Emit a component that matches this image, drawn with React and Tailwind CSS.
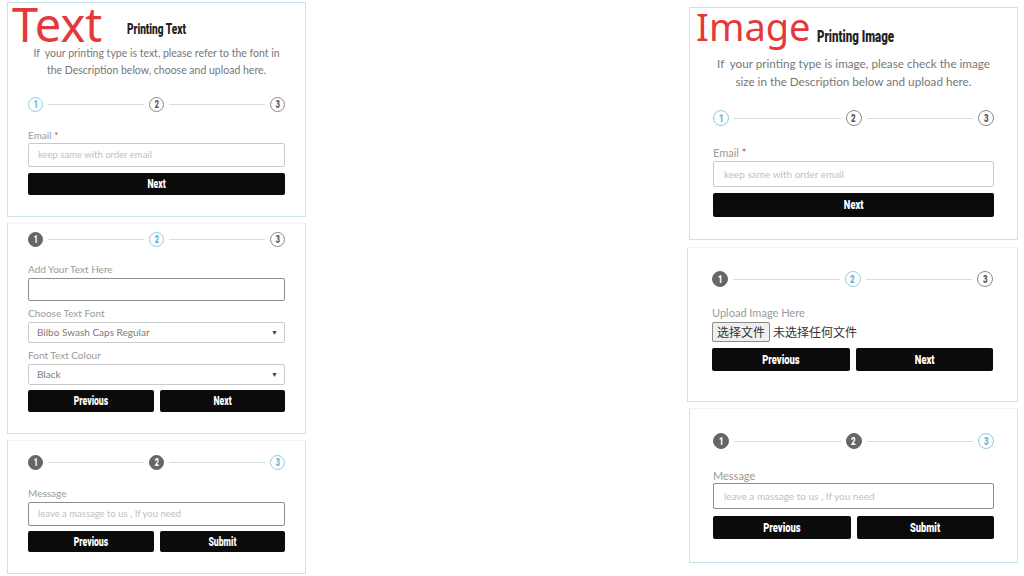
import React from 'react';

const cond = "font-['Roboto','Liberation_Sans',sans-serif]";
const light = "font-['Lato','Open_Sans',sans-serif]";

const Squeeze = ({ children, className = '' }) => (
  <span className={`inline-block scale-x-[0.72] ${className}`}>{children}</span>
);

const Circle = ({ n, state, size }) => {
  const dim = size === 'lg' ? 'w-[16px] h-[16px] text-[11px]' : 'w-[15px] h-[15px] text-[10px]';
  const look =
    state === 'done'
      ? 'bg-[#666] border-[#666] text-white'
      : state === 'active'
      ? 'bg-white border-[#8fcde0] text-[#5db4cf]'
      : 'bg-white border-[#8a8a8a] text-[#555]';
  return (
    <div className={`${dim} ${look} ${cond} shrink-0 rounded-full border-[1.5px] flex items-center justify-center font-black leading-none`}>
      <Squeeze>{n}</Squeeze>
    </div>
  );
};

const Stepper = ({ step, size, className = '' }) => {
  const state = (i) => (i < step ? 'done' : i === step ? 'active' : 'todo');
  return (
    <div className={`flex items-center ${className}`}>
      <Circle n="1" state={state(1)} size={size} />
      <div className="flex-1 h-px bg-[#d6dde0] mx-[5px]" />
      <Circle n="2" state={state(2)} size={size} />
      <div className="flex-1 h-px bg-[#d6dde0] mx-[5px]" />
      <Circle n="3" state={state(3)} size={size} />
    </div>
  );
};

const Label = ({ children, className = '', big }) => (
  <div className={`${light} ${big ? 'text-[11px]' : 'text-[10px]'} text-[#9a9a9a] leading-[14px] h-[14px] ${className}`}>{children}</div>
);

const Input = ({ placeholder, className = '', big, dark }) => (
  <div
    className={`${light} ${big ? 'text-[10px] px-[10px]' : 'text-[9.5px] px-[9px]'} flex items-center rounded-[2px] border ${
      dark ? 'border-[#8d8d8d]' : 'border-[#c9c9c9]'
    } text-[#c0c0c0] ${className}`}
  >
    {placeholder}
  </div>
);

const Select = ({ value, className = '' }) => (
  <div className={`${light} text-[10px] text-[#7a7a7a] flex items-center justify-between pl-[8px] pr-[6px] rounded-[2px] border border-[#c9c9c9] ${className}`}>
    <span>{value}</span>
    <span className="text-[7px] text-[#444]">▼</span>
  </div>
);

const Button = ({ children, className = '', big }) => (
  <div
    className={`${cond} ${big ? 'text-[13px]' : 'text-[12px]'} flex-1 flex items-center justify-center bg-[#0b0b0b] text-white font-black rounded-[2px] ${className}`}
  >
    <Squeeze>{children}</Squeeze>
  </div>
);

const Panel = ({ children, className = '' }) => (
  <div className={`bg-white border border-[#c7e3ec] ${className}`}>{children}</div>
);

export default function App() {
  return (
    <div className="w-[1024px] h-[576px] bg-white overflow-hidden flex">
      {/* left column: printing text */}
      <div className="ml-[7px] w-[299px] flex flex-col">
        <Panel className="mt-[2px] px-[20px] pb-[21px]">
          <div className="h-[40px] -ml-[16px] flex items-start">
            <span className="font-['Noto_Sans',sans-serif] text-[47px] leading-[42px] text-[#e4393c]">Text</span>
            <span className={`${cond} ml-[25px] mt-[19px] text-[14px] leading-[14px] font-black text-[#222]`}>
              <Squeeze className="origin-left">Printing Text</Squeeze>
            </span>
          </div>
          <p className={`${light} mt-[2px] text-[10.5px] leading-[17px] text-[#777] text-center whitespace-nowrap`}>
            If&nbsp; your printing type is text, please refer to the font in
            <br />
            the Description below, choose and upload here.
          </p>
          <Stepper step={1} className="mt-[18px]" />
          <Label className="mt-[16px]">
            Email <span className="text-[#e4393c]">*</span>
          </Label>
          <Input placeholder="keep same with order email" className="mt-[1px] h-[24px]" />
          <div className="mt-[6px] h-[22px] flex">
            <Button>Next</Button>
          </div>
        </Panel>

        <Panel className="mt-[6px] px-[20px] pt-[8px] pb-[21px] border-t-[#edf5f8]">
          <Stepper step={2} />
          <Label className="mt-[15px]">Add Your Text Here</Label>
          <Input placeholder="" dark className="mt-[2px] h-[23px]" />
          <Label className="mt-[5px]">Choose Text Font</Label>
          <Select value="Bilbo Swash Caps Regular" className="mt-[2px] h-[21px]" />
          <Label className="mt-[5px]">Font Text Colour</Label>
          <Select value="Black" className="mt-[2px] h-[21px]" />
          <div className="mt-[5px] h-[22px] flex gap-[6px]">
            <Button>Previous</Button>
            <Button>Next</Button>
          </div>
        </Panel>

        <Panel className="mt-[6px] px-[20px] pt-[14px] pb-[21px] border-t-[#edf5f8]">
          <Stepper step={3} />
          <Label className="mt-[16px]">Message</Label>
          <Input placeholder="leave a massage to us , If you need" dark className="mt-[2px] h-[24px]" />
          <div className="mt-[5px] h-[21px] flex gap-[6px]">
            <Button>Previous</Button>
            <Button>Submit</Button>
          </div>
        </Panel>
      </div>

      {/* right column: printing image */}
      <div className="ml-auto mr-[6px] w-[331px] flex flex-col">
        <Panel className="mt-[7px] ml-[2px] px-[23px] pb-[22px]">
          <div className="h-[36px] -ml-[17px] flex items-start">
            <span className="font-['Noto_Sans',sans-serif] text-[38px] leading-[37px] text-[#e4393c]">Image</span>
            <span className={`${cond} ml-[6px] mt-[21px] text-[16px] leading-[16px] font-black text-[#222]`}>
              <Squeeze className="origin-left">Printing Image</Squeeze>
            </span>
          </div>
          <p className={`${light} mt-[10px] text-[11.7px] leading-[18px] text-[#777] text-center whitespace-nowrap`}>
            If&nbsp; your printing type is image, please check the image
            <br />
            size in the Description below and upload here.
          </p>
          <Stepper step={1} size="lg" className="mt-[20px]" />
          <Label big className="mt-[20px]">
            Email <span className="text-[#e4393c]">*</span>
          </Label>
          <Input big placeholder="keep same with order email" className="mt-[1px] h-[26px]" />
          <div className="mt-[6px] h-[24px] flex">
            <Button big>Next</Button>
          </div>
        </Panel>

        <Panel className="mt-[7px] px-[24px] pt-[23px] pb-[30px] border-t-[#edf5f8]">
          <Stepper step={2} size="lg" />
          <Label big className="mt-[19px]">Upload Image Here</Label>
          <div className="mt-[2px] h-[20px] flex items-center font-['Noto_Sans_CJK_SC',sans-serif] text-[12px] text-[#333]">
            <span className="h-[20px] px-[4px] flex items-center border border-[#8a8a8a] bg-[#efefef] rounded-[2px]">选择文件</span>
            <span className="ml-[3px]">未选择任何文件</span>
          </div>
          <div className="mt-[6px] h-[23px] flex gap-[6px]">
            <Button big>Previous</Button>
            <Button big>Next</Button>
          </div>
        </Panel>

        <Panel className="mt-[6px] ml-[2px] px-[23px] pt-[24px] pb-[23px] border-t-[#edf5f8]">
          <Stepper step={3} size="lg" />
          <Label big className="mt-[20px]">Message</Label>
          <Input big placeholder="leave a massage to us , If you need" dark className="h-[26px]" />
          <div className="mt-[7px] h-[23px] flex gap-[6px]">
            <Button big>Previous</Button>
            <Button big>Submit</Button>
          </div>
        </Panel>
      </div>
    </div>
  );
}
